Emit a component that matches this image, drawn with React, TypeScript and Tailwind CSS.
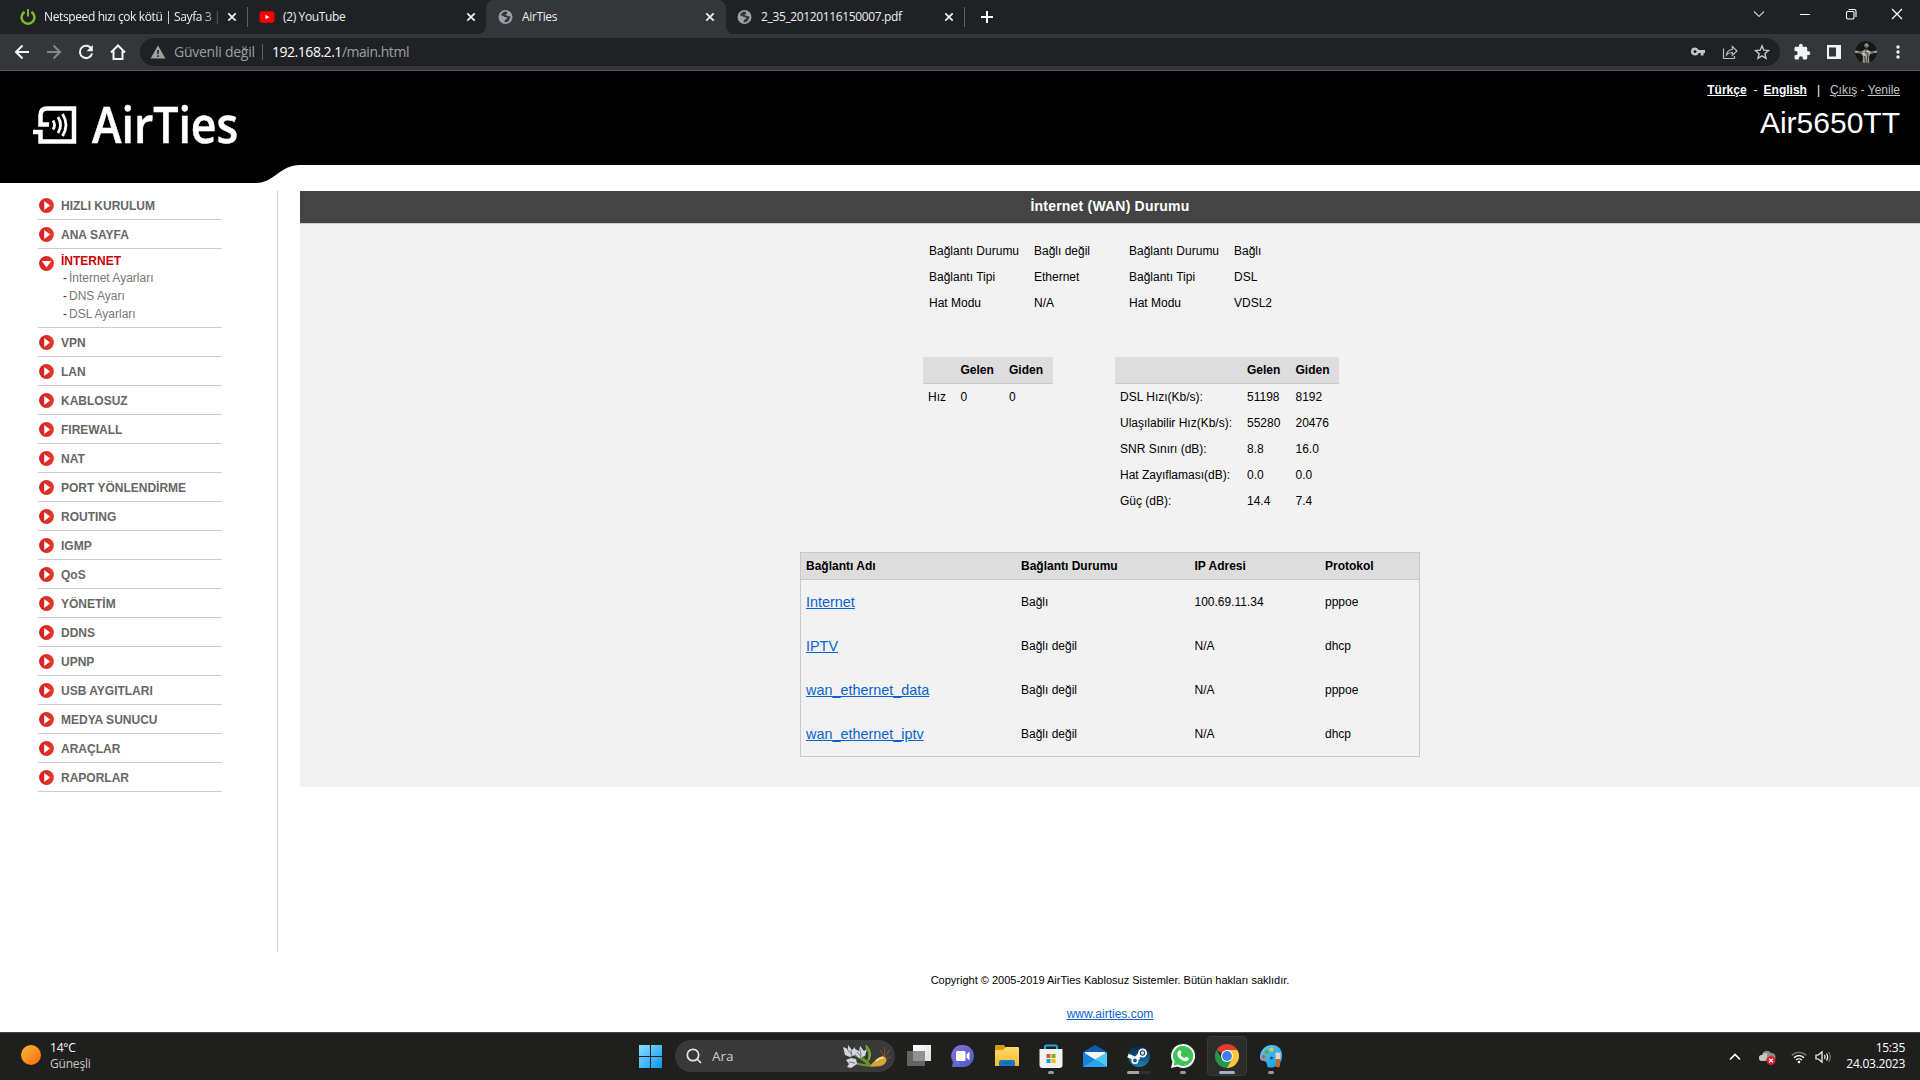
import React from "react";

const ui = "font-['Open_Sans','Noto_Sans',sans-serif]";

function Close() {
  return (
    <svg width="16" height="16" viewBox="0 0 16 16" className="shrink-0" stroke="#f1f3f4" strokeWidth="1.7">
      <path d="M4.3 4.3l7.4 7.4M11.7 4.3l-7.4 7.4" />
    </svg>
  );
}

function Globe() {
  return (
    <svg width="16" height="16" viewBox="0 0 16 16" className="shrink-0">
      <circle cx="7.500" cy="8" r="7" fill="#9aa0a6" />
      <path d="M8.200 2.500C6 2.400 3.600 4 3 6.300c.8.9 2.200.3 2.900 1.100.8 1 2.300.3 3 1.300.5.900-.3 1.600-1.200 1.700-1 .2-.9 1.600-1.300 2.600 1.800.6 3.500-.1 4.500-1.400.6-.9.500-1.700 1.100-2.400.5-.7.500-1.300.3-1.900-.9-.3-1.500.3-2.300-.2-.8-.6-1.900-.3-2.400-1 0-.9 1.400-.7 1.600-1.600.2-.7-.5-1.100-1-2z" fill="#35363a" />
    </svg>
  );
}

function Tab({ icon, title, width, fade }: { icon: React.ReactNode; title: string; width: string; fade?: boolean }) {
  return (
    <div className={`flex h-[34px] items-center text-[12px] text-[#eceff1] ${width}`}>
      {icon}
      <span className={`ml-[8px] flex-1 overflow-hidden whitespace-nowrap pb-px ${fade ? "tracking-[-0.38px] [mask-image:linear-gradient(90deg,#000_88%,transparent)]" : "tracking-[-0.36px]"}`}>{title}</span>
      <Close />
    </div>
  );
}

function TabStrip() {
  return (
    <div className="flex h-[34px] bg-[#202124] pl-[20px]">
      <Tab
        width="w-[220px]"
        fade
        title="Netspeed hızı çok kötü | Sayfa 3 |"
        icon={
          <svg width="16" height="16" viewBox="0 0 16 16" fill="none" stroke="#7bb92c" strokeWidth="2.5" className="shrink-0">
            <path d="M4.600 2.900a6.400 6.400 0 1 0 6.800 0" />
            <path d="M8 0v7.500" strokeWidth="2" />
          </svg>
        }
      />
      <div className="ml-[7px] mt-[7px] h-5 w-px bg-[#5f6368]" />
      <div className="ml-[11px]">
        <Tab
          width="w-[220px]"
          title="(2) YouTube"
          icon={
            <svg width="16" height="16" viewBox="0 0 16 16" className="shrink-0">
              <rect x="0.500" y="2.200" width="15" height="11.600" rx="3" fill="#f00" />
              <path d="M6.400 5.700v4.600l4-2.300z" fill="#fff" />
            </svg>
          }
        />
      </div>
      <div className="ml-[-1px] flex items-end">
        <div className="h-2 w-2 bg-[#35363a]">
          <div className="h-2 w-2 rounded-br-lg bg-[#202124]" />
        </div>
        <div className="h-[34px] w-[240px] rounded-t-lg bg-[#35363a] pl-[12px]">
          <Tab width="w-[220px]" title="AirTies" icon={<Globe />} />
        </div>
        <div className="h-2 w-2 bg-[#35363a]">
          <div className="h-2 w-2 rounded-bl-lg bg-[#202124]" />
        </div>
      </div>
      <div className="ml-[3px]">
        <Tab width="w-[220px]" title="2_35_20120116150007.pdf" icon={<Globe />} />
      </div>
      <div className="ml-[7px] mt-[7px] h-5 w-px bg-[#5f6368]" />
      <svg width="16" height="16" viewBox="0 0 16 16" className="ml-[14px] mt-[9px]" stroke="#fff" strokeWidth="2">
        <path d="M8 2v12M2 8h12" />
      </svg>
      <div className="ml-auto flex gap-[30px] pr-[15px] pt-[6px]">
        <svg width="16" height="16" fill="none" stroke="#c8c9cb" strokeWidth="1.100"><path d="M3 5.500l5 5 5-5" /></svg>
        <svg width="16" height="16" fill="none" stroke="#fff"><path d="M3 8.500h10" /></svg>
        <svg width="16" height="16" fill="none" stroke="#fff" strokeWidth="1.100">
          <rect x="3.500" y="5.500" width="7.500" height="7.500" rx="1.200" />
          <path d="M5.500 3.500h5.500a2 2 0 0 1 2 2v5.500" />
        </svg>
        <svg width="16" height="16" fill="none" stroke="#fff" strokeWidth="1.200"><path d="M3 3l10 10M13 3L3 13" /></svg>
      </div>
    </div>
  );
}

function Toolbar() {
  return (
    <div className="flex h-[37px] items-center border-b border-[#55565a] bg-[#35363a] pl-[14px]">
      <div className="flex gap-4">
        <svg width="16" height="16" fill="none" stroke="#f1f3f4" strokeWidth="2"><path d="M15 8H2.500M8.500 1.500L2 8l6.500 6.500" /></svg>
        <svg width="16" height="16" fill="none" stroke="#85878a" strokeWidth="2"><path d="M1 8h12.500M7.500 1.500L14 8l-6.500 6.500" /></svg>
        <svg width="16" height="16" fill="none" stroke="#f1f3f4" strokeWidth="2">
          <path d="M13.600 5A6.200 6.200 0 1 0 14.100 9.500" />
          <path d="M14.800 1v6.200H8.600z" fill="#f1f3f4" stroke="none" />
        </svg>
        <svg width="16" height="16" fill="none" stroke="#f1f3f4" strokeWidth="2"><path d="M1 8.500L8 1.500l7 7M3.500 7v8h9V7" /></svg>
      </div>
      <div className="ml-[14px] flex h-7 w-[1640px] items-center rounded-full bg-[#202124] pl-[10px] pr-[10px] text-[14px]">
        <svg width="16" height="16" viewBox="0 0 16 16"><path d="M8 1.500L15.500 14.500H.5z" fill="#9aa0a6" /><path d="M8 6v4M8 11.300v1.700" stroke="#202124" strokeWidth="1.500" /></svg>
        <span className="ml-[8px] w-[88px] whitespace-nowrap pb-px tracking-[-0.25px] text-[#9aa0a6]">Güvenli değil</span>
        <div className="h-4 w-px bg-[#5f6368]" />
        <span className="ml-[9px] whitespace-nowrap pb-px tracking-[-0.47px] text-[#9aa0a6]"><span className="text-white">192.168.2.1</span>/main.html</span>
        <div className="ml-auto flex gap-4">
          <svg width="16" height="16" viewBox="0 0 16 16" fill="#c4c6c8"><path fillRule="evenodd" d="M5 3.500a4 4 0 1 0 3.700 5.500h2v2.500h2.800V9H15V6H8.700A4 4 0 0 0 5 3.500zm0 2.500a1.500 1.500 0 1 1 0 3 1.500 1.500 0 0 1 0-3z" /></svg>
          <svg width="16" height="16" viewBox="0 0 16 16" fill="none" stroke="#b8babd" strokeWidth="1.200"><path d="M1.500 4.500v10h11v-2.500" /><path d="M4.500 11c.3-3.700 2.500-5.300 5.800-5.500V2.500L15 7l-4.700 4.300V8.500C7.500 8.400 6 9 4.500 11z" /></svg>
          <svg width="16" height="16" viewBox="0 0 16 16" fill="none" stroke="#c4c6c8" strokeWidth="1.400"><path d="M8 1.800l1.800 4.400 4.700.4-3.600 3.100 1.100 4.600L8 11.900l-4 2.400 1.100-4.600-3.600-3.100 4.700-.4z" /></svg>
        </div>
      </div>
      <svg width="18" height="18" viewBox="0 0 24 24" fill="#f1f3f4" className="ml-[13px]"><path d="M20.500 11H19V7c0-1.100-.9-2-2-2h-4V3.500a2.500 2.500 0 0 0-5 0V5H4c-1.100 0-2 .9-2 2v3.800h1.500a2.700 2.700 0 0 1 0 5.400H2V20c0 1.100.9 2 2 2h3.800v-1.500a2.700 2.700 0 0 1 5.400 0V22H17c1.100 0 2-.9 2-2v-4h1.500a2.500 2.500 0 0 0 0-5z" /></svg>
      <svg width="14" height="14" className="ml-[16px]"><path d="M0 0h14v14H0zM2 2.500v9h7v-9z" fillRule="evenodd" fill="#f1f3f4" /></svg>
      <svg width="22" height="22" viewBox="0 0 22 22" className="ml-[14px] overflow-hidden rounded-full">
        <circle cx="11" cy="11" r="11" fill="#151515" />
        <path d="M0 9.500l7 .7 2.500-1.700h3L15 10.200l7-.7v2.200l-6.500 1-1.500 3 .5 6.500h-7l.5-6.500-1.500-3L0 11.700z" fill="#9c9a95" />
        <circle cx="11.500" cy="4.500" r="2.200" fill="#8d8b86" />
        <path d="M11 5v5M9.500 14l1 8M13 13l-1 9M3 11h4M10 11l3 2M16 11h3" stroke="#3b3a37" />
        <path d="M8.500 12l1 3M12.500 10l2 1" stroke="#e3e1dc" />
      </svg>
      <svg width="4" height="16" className="ml-[19px]" fill="#f1f3f4"><circle cx="2" cy="3" r="1.700" /><circle cx="2" cy="8" r="1.700" /><circle cx="2" cy="13" r="1.700" /></svg>
    </div>
  );
}

function Header() {
  return (
    <div className="relative h-[94px] bg-black">
      <svg width="300" height="19" viewBox="0 0 300 19" className="absolute left-0 top-[93px]"><path d="M0 0h300v1c-20 0-26 18-44 18H0z" /></svg>
      <div className="relative flex justify-between pl-[33px] pr-5">
        <div className="flex pt-[35px]">
          <svg width="44" height="38" viewBox="0 0 44 38" fill="none" stroke="#fff" strokeWidth="4.500">
            <path d="M16 18.500H7.500V9.500Q7.500 2.500 14 2.500H41V35.500H7.500V26H0" />
            <path d="M20 14.500q3 4.500 0 9M25 11q5 8 0 16M29.500 8q7 11 0 22" strokeWidth="2.800" />
          </svg>
          <span className="ml-[15px] mt-[-17px] origin-left scale-x-[0.875] whitespace-nowrap font-['Open_Sans'] text-[51px] font-semibold leading-[69px] text-white [-webkit-text-stroke:0.5px_white]">AirTies</span>
        </div>
        <div className="flex flex-col items-end pt-[12px] text-[12px] leading-[14px] text-white">
          <div className="flex whitespace-pre">
            <b className="underline">Türkçe</b>
            <span className="ml-[7px] w-[10px]">-</span>
            <b className="underline">English</b>
            <span className="ml-[10px] w-[13px]">|</span>
            <span className="text-[#c5c5c5]"><u>Çıkış</u> - <u>Yenile</u></span>
          </div>
          <div className="mt-[9px] text-[30px] leading-[34px]">Air5650TT</div>
        </div>
      </div>
    </div>
  );
}

function Bullet({ open }: { open?: boolean }) {
  return (
    <svg width="15" height="15" viewBox="0 0 15 15" className="shrink-0">
      <defs><linearGradient id="bul"><stop stopColor="#d11f26" /><stop offset="1" stopColor="#ea3a28" /></linearGradient></defs>
      <circle cx="7.500" cy="7.500" r="7.400" fill="url(#bul)" />
      {open ? <path d="M2.800 5h9.400L7.500 11.500z" fill="#fff" /> : <path d="M5.200 3v9l5.900-4.500z" fill="#fff" />}
    </svg>
  );
}

function MenuItem({ label }: { label: string }) {
  return (
    <li className="flex h-[29px] items-center gap-[7px] border-b border-[#ccc] pl-px pt-px text-[12px] font-bold text-[#666]">
      <Bullet />
      <span className="whitespace-nowrap">{label}</span>
    </li>
  );
}

const menuRest = ["VPN", "LAN", "KABLOSUZ", "FIREWALL", "NAT", "PORT YÖNLENDİRME", "ROUTING", "IGMP", "QoS", "YÖNETİM", "DDNS", "UPNP", "USB AYGITLARI", "MEDYA SUNUCU", "ARAÇLAR", "RAPORLAR"];

function Sidebar() {
  return (
    <nav className="mt-[26px] h-[761px] w-[278px] border-r border-[#ccc] pl-[38px]">
      <ul className="w-[184px]">
        <MenuItem label="HIZLI KURULUM" />
        <MenuItem label="ANA SAYFA" />
        <li className="flex h-[79px] gap-[7px] border-b border-[#ccc] pl-px">
          <div className="pt-[7px]"><Bullet open /></div>
          <div className="pt-[3px] text-[12px] leading-[18px] text-[#777]">
            <div className="h-[17px] font-bold text-[#c00]">İNTERNET</div>
            {["İnternet Ayarları", "DNS Ayarı", "DSL Ayarları"].map((s) => (
              <div key={s} className="flex h-[18px] pl-[2px]"><span className="w-[6px] text-[#c00]">-</span>{s}</div>
            ))}
          </div>
        </li>
        {menuRest.map((m) => <MenuItem key={m} label={m} />)}
      </ul>
    </nav>
  );
}

function Info({ rows }: { rows: string[][] }) {
  return (
    <div className="w-[200px]">
      {rows.map(([a, b]) => (
        <div key={a} className="flex h-[26px] items-center whitespace-nowrap"><span className="w-[105px]">{a}</span><span>{b}</span></div>
      ))}
    </div>
  );
}

function Speed({ rows, cols }: { rows: string[][]; cols: string }) {
  return (
    <div>
      <div className={`grid h-[27px] items-center border-b border-[#c8c8c8] bg-[#ddd] pl-[5px] font-bold ${cols}`}>
        <span /><span>Gelen</span><span>Giden</span>
      </div>
      {rows.map((r) => (
        <div key={r[0]} className={`grid h-[26px] items-center whitespace-nowrap pl-[5px] ${cols}`}>
          {r.map((c, i) => <span key={i}>{c}</span>)}
        </div>
      ))}
    </div>
  );
}

const connections = [
  ["Internet", "Bağlı", "100.69.11.34", "pppoe"],
  ["IPTV", "Bağlı değil", "N/A", "dhcp"],
  ["wan_ethernet_data", "Bağlı değil", "N/A", "pppoe"],
  ["wan_ethernet_iptv", "Bağlı değil", "N/A", "dhcp"],
];

function Main() {
  return (
    <main className="ml-[22px] mt-[26px] flex-1 text-[12px] text-black">
      <section className="h-[596px] bg-[#f2f2f2]">
        <h1 className="flex h-[33px] items-center justify-center border-b border-[#ccc] bg-[#444] pb-px text-[14px] font-bold tracking-[0.2px] text-white">İnternet (WAN) Durumu</h1>
        <div className="flex pl-[629px] pt-[14px]">
          <Info rows={[["Bağlantı Durumu", "Bağlı değil"], ["Bağlantı Tipi", "Ethernet"], ["Hat Modu", "N/A"]]} />
          <Info rows={[["Bağlantı Durumu", "Bağlı"], ["Bağlantı Tipi", "DSL"], ["Hat Modu", "VDSL2"]]} />
        </div>
        <div className="mt-[41px] flex h-[195px] pl-[623px]">
          <div className="w-[130px]"><Speed cols="grid-cols-[32.5px_48.5px_44px]" rows={[["Hız", "0", "0"]]} /></div>
          <div className="ml-[62px] w-[224px]">
            <Speed
              cols="grid-cols-[127px_48.5px_43.5px]"
              rows={[["DSL Hızı(Kb/s):", "51198", "8192"], ["Ulaşılabilir Hız(Kb/s):", "55280", "20476"], ["SNR Sınırı (dB):", "8.8", "16.0"], ["Hat Zayıflaması(dB):", "0.0", "0.0"], ["Güç (dB):", "14.4", "7.4"]]}
            />
          </div>
        </div>
        <div className="ml-[500px] h-[205px] w-[620px] border border-[#c8c8c8]">
          <div className="grid h-[27px] grid-cols-[215px_173.5px_130.5px_1fr] items-center border-b border-[#c8c8c8] bg-[#ddd] pl-[5px] font-bold">
            <span>Bağlantı Adı</span><span>Bağlantı Durumu</span><span>IP Adresi</span><span>Protokol</span>
          </div>
          {connections.map((r) => (
            <div key={r[0]} className="grid h-[44px] grid-cols-[215px_173.5px_130.5px_1fr] items-center pl-[5px]">
              <a className="text-[14.4px] leading-[20px] text-[#0b62cc] underline">{r[0]}</a><span>{r[1]}</span><span>{r[2]}</span><span>{r[3]}</span>
            </div>
          ))}
        </div>
      </section>
      <footer className="flex flex-col items-center pt-[186px]">
        <span className="text-[11px] leading-[14px]">Copyright © 2005-2019 AirTies Kablosuz Sistemler. Bütün hakları saklıdır.</span>
        <a className="mt-[20px] leading-[14px] text-[#0b62cc] underline">www.airties.com</a>
      </footer>
    </main>
  );
}

function AppIcon({ children, mark, active }: { children: React.ReactNode; mark?: string; active?: boolean }) {
  return (
    <div className={`flex h-10 w-10 flex-col items-center rounded-[4px] ${active ? "border border-[#3a3a39] bg-[#2d2d2c] pt-[7px]" : "pt-[8px]"}`}>
      <svg width="24" height="24" viewBox="0 0 24 24" className="shrink-0">{children}</svg>
      {mark && <div className={`mt-[3px] h-[3px] shrink-0 rounded-full ${mark}`} />}
    </div>
  );
}

function Taskbar() {
  return (
    <div className={`flex h-12 border-t border-[#454545] bg-[#1f1f1e] text-white ${ui}`}>
      <div className="flex w-[631px] pl-[20px] pt-[12px]">
        <svg width="22" height="22"><defs><linearGradient id="sun" x2="1" y2="1"><stop stopColor="#f9b934" /><stop offset="1" stopColor="#f76a0c" /></linearGradient></defs><circle cx="11" cy="10" r="10" fill="url(#sun)" /></svg>
        <div className="ml-[8px] mt-[-5px] text-[12px] leading-4 tracking-[-0.2px]"><div>14°C</div><div className="text-[#c8c8c8]">Güneşli</div></div>
      </div>
      <div className="flex pt-[3px]">
        <AppIcon>
          <defs><linearGradient id="win" x2="1" y2="1"><stop stopColor="#8be0ff" /><stop offset="1" stopColor="#0a95f5" /></linearGradient></defs>
          <path d="M0 1h11v11H0zM12 1h11v11h-11zM0 13h11v11H0zM12 13h11v11h-11z" fill="url(#win)" />
        </AppIcon>
        <div className="ml-[4px] mt-[4px] flex h-8 w-[220px] items-center rounded-full bg-[#393939] pl-[11px] pr-[3px]">
          <svg width="16" height="16" fill="none" stroke="#e6e6e6" strokeWidth="1.700"><circle cx="7" cy="7" r="5.700" /><path d="M11 11l4 4" /></svg>
          <span className="ml-[10px] text-[13.5px] text-[#d0d0d0]">Ara</span>
          <svg width="50" height="26" viewBox="0 0 50 26" className="ml-auto">
            <path d="M13 20q9 3 18 3M9 10q10 4 19 13M16 12q8 5 12 10M24 3q6 9 1 17" fill="none" stroke="#69952d" strokeWidth="2" />
            <path d="M24 2q7 7 3 15" fill="none" stroke="#8fc044" />
            <path d="M1 4l5 2 0-4 4 5 3-3 0 8-5 2-5-2zM13 6l4 2 1-5 4 5 3-2-2 7-6 2-4-4zM4 17l5-2 5 1 1 5-6 4-4-1 2-3z" fill="#d5d5df" />
            <path d="M5 6l5 6M18 6l1 7M7 19l6 1M9 7l1 6M15 9l4 5" stroke="#75758b" />
            <path d="M28 23q7-9 13-10 5 2 3 6-3 6-16 4z" fill="#d7a43a" />
            <path d="M34 18q5-4 8-3" stroke="#f5d88b" strokeWidth="2" fill="none" />
            <path d="M42 14l1-10M43 14l5-8M44 16l5-2M42 13l-4-6" stroke="#84552a" fill="none" />
          </svg>
        </div>
        <div className="ml-[4px] flex gap-1">
          <AppIcon>
            <defs><linearGradient id="tv" x2="1" y2="1"><stop stopColor="#fff" /><stop offset="1" stopColor="#ddd" /></linearGradient></defs>
            <path d="M6 1h18v16H6z" fill="url(#tv)" /><path d="M0 7h18v15H0z" fill="#6b6b6b" opacity=".9" /><path d="M6 7h12v10H6z" fill="#929292" />
          </AppIcon>
          <AppIcon>
            <defs><linearGradient id="chat" x2="1" y2="1"><stop stopColor="#8372d8" /><stop offset="1" stopColor="#5059c9" /></linearGradient></defs>
            <path d="M12 1A11 11 0 0 1 12 23H1l1-5A11 11 0 0 1 12 1z" fill="url(#chat)" />
            <rect x="5" y="7" width="9.500" height="10" rx="1.500" fill="#fff" /><path d="M15.500 10.500l3-3v9l-3-3z" fill="#fff" />
          </AppIcon>
          <AppIcon>
            <defs><linearGradient id="fol" x2="0" y2="1"><stop stopColor="#ffda67" /><stop offset="1" stopColor="#f8b92f" /></linearGradient></defs>
            <path d="M0 2q0-1 1-1h8l2 3v4H0z" fill="#d99a08" />
            <path d="M0 6h8l3-3h12q1 0 1 1v18H0z" fill="url(#fol)" />
            <path d="M4 22v-4q0-2 2-2h12q2 0 2 2v4z" fill="#1679c7" /><path d="M8 19h8" stroke="#0b5a9b" />
          </AppIcon>
          <AppIcon mark="w-[6px] bg-[#9a9a9a]">
            <path d="M6 6V3q0-1.500 1.500-1.500h9Q18 1.500 18 3v3" fill="none" stroke="#1ba8e8" strokeWidth="2" />
            <path d="M.5 5h23v16q0 3-3 3h-17q-3 0-3-3z" fill="#f2f2f2" />
            <path d="M7.500 10h4v4h-4z" fill="#f25022" /><path d="M12.500 10h4v4h-4z" fill="#7fba00" /><path d="M7.500 15h4v4h-4z" fill="#00a4ef" /><path d="M12.500 15h4v4h-4z" fill="#ffb900" />
          </AppIcon>
          <AppIcon>
            <path d="M0 8L12 1l12 7v6H0z" fill="#0a5fae" /><path d="M2 8h20v6l-10 4L2 14z" fill="#f3f3f3" />
            <path d="M0 8l24 15H0z" fill="#1784d8" /><path d="M24 8v15L12 15.500z" fill="#50c8f5" /><path d="M0 23l12-7.500L24 23z" fill="#2aa5ea" />
          </AppIcon>
          <AppIcon mark="w-6 bg-[linear-gradient(90deg,#a5a5a5_50%,#303030_50%)]">
            <defs><linearGradient id="stm" x2="0" y2="1"><stop stopColor="#101c3c" /><stop offset="1" stopColor="#1583bc" /></linearGradient></defs>
            <circle cx="12" cy="12" r="11" fill="url(#stm)" />
            <path d="M1 11.500l8 3.500 3.500-2M9.500 14l5-6" stroke="#fff" strokeWidth="3.600" fill="none" />
            <circle cx="15.500" cy="9" r="3.600" fill="#1a2f54" stroke="#fff" strokeWidth="1.800" /><circle cx="15.500" cy="9" r="1.800" fill="#ddd" />
            <circle cx="8" cy="16.500" r="2.700" fill="#1a4f80" stroke="#fff" strokeWidth="1.600" />
          </AppIcon>
          <AppIcon mark="w-[6px] bg-[#9a9a9a]">
            <path d="M12 0A12 12 0 1 1 6.500 22.600L0 24l1.500-6.200A12 12 0 0 1 12 0z" fill="#fff" />
            <path d="M12 2A10 10 0 1 1 7 20.600L2.700 21.500l1-4A10 10 0 0 1 12 2z" fill="#3bc354" />
            <path d="M8 6.500c1-.7 1.700 0 2.400 2 .3.800-.8 1.500-.8 1.900.7 1.700 2.200 3 4 3.600.6-.1 1.100-1.300 1.700-1.200.9.300 2.600 1 2.600 1.500 0 2.200-2 3.200-3.800 2.900-4-.7-7.500-4.200-7.800-7.200C6.200 8.500 7 7.200 8 6.500z" fill="#fff" />
          </AppIcon>
          <AppIcon active mark="w-4 bg-[#9db0bd]">
            <path d="M12 12L1.600 6A12 12 0 0 1 22.400 6z" fill="#e33b2e" />
            <path d="M12 12L22.400 6A12 12 0 0 1 12 24z" fill="#fcc934" />
            <path d="M12 12v0l5.200 3L12 24A12 12 0 0 1 1.600 6L6.800 15z" fill="#249a49" />
            <path d="M12 6h10.400L17.200 15 12 12z" fill="#fcc934" />
            <circle cx="12" cy="12" r="6" fill="#fff" /><circle cx="12" cy="12" r="4.900" fill="#3f80ea" />
          </AppIcon>
          <AppIcon mark="w-[6px] bg-[#9a9a9a]">
            <defs><linearGradient id="pal" x2="1" y2="1"><stop stopColor="#62cdf5" /><stop offset="1" stopColor="#1a93dc" /></linearGradient></defs>
            <path d="M13 1C5 1 .5 8 1 14c.5 4 4 2 6 4s0 5 3 5.500c8 .5 14-4.500 13-13.500C22.500 4 18 1 13 1z" fill="url(#pal)" />
            <circle cx="7.500" cy="8" r="2" fill="#5ba83c" /><circle cx="12.500" cy="5.500" r="2" fill="#f7c62f" /><circle cx="4.500" cy="13" r="2" fill="#e25a34" /><circle cx="12.500" cy="14" r="1.500" fill="#154c79" />
            <path d="M17 14h4v8q-2 3-4 0z" fill="#bb6d25" /><path d="M16.500 8.500l1 .5 1-1 1.500 1 1.500-1v7h-5z" fill="#d8d8d8" />
          </AppIcon>
        </div>
      </div>
      <div className="ml-auto flex items-center pr-[15px]">
        <svg width="16" height="16" fill="none" stroke="#fff" strokeWidth="1.600"><path d="M3 10.500l5-5 5 5" /></svg>
        <svg width="18" height="16" viewBox="0 0 18 16" className="ml-[15px]">
          <path d="M4 12a3 3 0 0 1 0-6 5 5 0 0 1 9-2 3.500 3.500 0 0 1 1 8z" fill="#8d8d8d" />
          <path d="M4 12a3 3 0 0 1 0-6 5 5 0 0 1 5-2q1 5-2 8z" fill="#c4c4c4" />
          <circle cx="13" cy="11.500" r="4.500" fill="#d9202c" /><path d="M11.200 9.700l3.600 3.600M14.800 9.700l-3.600 3.600" stroke="#fff" strokeWidth="1.300" />
        </svg>
        <svg width="16" height="16" viewBox="0 0 16 16" fill="none" className="ml-[15px]" strokeWidth="1.300">
          <path d="M.8 6.500a10 10 0 0 1 14.400 0" stroke="#777" /><path d="M3 8.800a7 7 0 0 1 10 0M5.200 11a4 4 0 0 1 5.600 0" stroke="#fff" /><circle cx="8" cy="13" r="1.300" fill="#fff" />
        </svg>
        <svg width="16" height="16" viewBox="0 0 16 16" fill="none" className="ml-[8px]" stroke="#fff" strokeWidth="1.200">
          <path d="M1 6h2.500L7 2.800v10.400L3.500 10H1z" /><path d="M9.500 6q1.300 2 0 4M11.500 4.500q2.300 3.500 0 7" /><path d="M13.700 3q3.200 5 0 10" stroke="#777" />
        </svg>
        <div className="ml-[14px] mt-[-1px] w-[60px] whitespace-nowrap text-right text-[12px] leading-4 tracking-[-0.25px]"><div>15:35</div><div>24.03.2023</div></div>
      </div>
    </div>
  );
}

export default function App() {
  return (
    <div className="flex h-[1080px] w-[1920px] flex-col overflow-hidden bg-white font-['Liberation_Sans',Arial,sans-serif]">
      <div className={ui}>
        <TabStrip />
        <Toolbar />
      </div>
      <Header />
      <div className="flex h-[867px]">
        <Sidebar />
        <Main />
      </div>
      <Taskbar />
    </div>
  );
}
